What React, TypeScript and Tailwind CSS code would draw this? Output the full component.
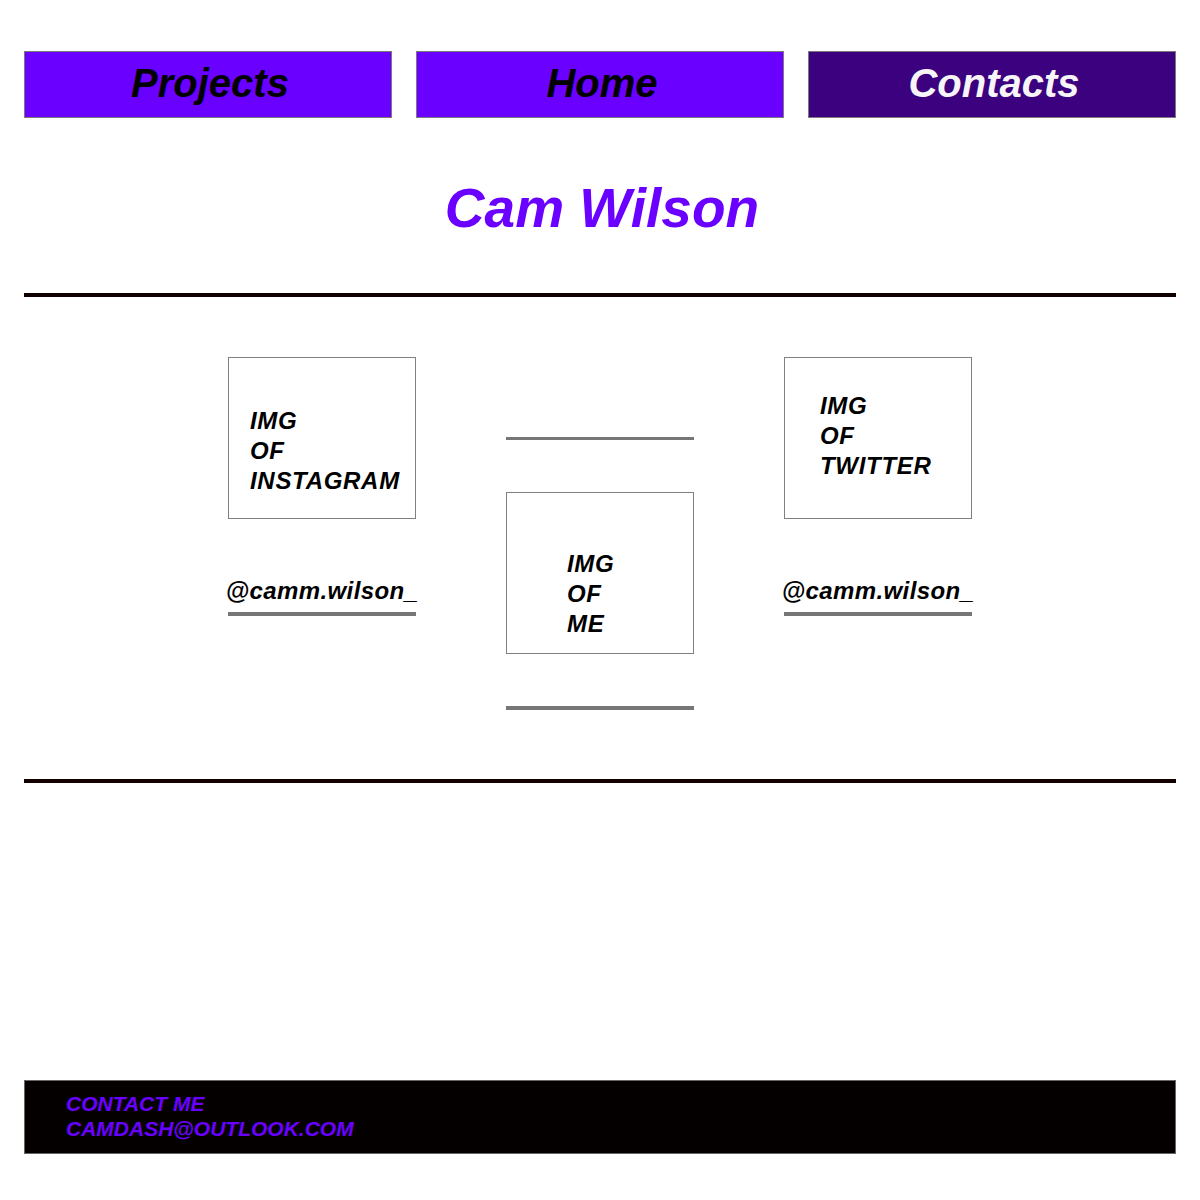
// App.tsx - Contacts page: nav tabs, name heading, social cards, footer

const navItems = [
  { label: "Projects", active: false },
  { label: "Home", active: false },
  { label: "Contacts", active: true },
];

function ImgBox({ lines, pad }: { lines: string[]; pad: string }) {
  return (
    <div className={`h-[162px] w-[188px] border border-[#808080] text-[24px] leading-[30px] tracking-[0.7px] text-black ${pad}`}>
      {lines.map((line) => (
        <p key={line}>{line}</p>
      ))}
    </div>
  );
}

function Handle() {
  return (
    <>
      <div className="mt-[57px] flex justify-center">
        <p className="whitespace-nowrap text-[24px] leading-[30px] tracking-[0.4px] text-black">@camm.wilson_</p>
      </div>
      <div className="mt-[6px] h-[4px] bg-[#767676]" />
    </>
  );
}

export default function App() {
  return (
    <div className="min-h-[1200px] bg-white px-[24px] pt-[51px] font-['Liberation_Sans',Arial,sans-serif] font-bold italic">
      {/* Nav tabs */}
      <nav className="flex gap-[24px]">
        {navItems.map((item) => (
          <div
            key={item.label}
            className={`flex h-[67px] flex-1 items-center justify-center border border-[#7a7a7a] pb-[4px] pl-[4px] text-[40px] ${
              item.active ? "bg-[#3b017f] text-[#f7f5f7]" : "bg-[#6a00ff] text-black"
            }`}
          >
            {item.label}
          </div>
        ))}
      </nav>

      {/* Name */}
      <h1 className="mt-[58px] pl-[4px] text-center text-[55px] leading-[64px] text-[#6a00ff]">Cam Wilson</h1>

      <div className="mt-[53px] h-[4px] bg-[#120000]" />

      {/* Social cards */}
      <section className="flex items-start justify-center gap-[90px] pt-[60px] pb-[69px]">
        <div className="w-[188px]">
          <ImgBox lines={["IMG", "OF", "INSTAGRAM"]} pad="pl-[21px] pt-[48px]" />
          <Handle />
        </div>

        <div className="w-[188px] pt-[80px]">
          <div className="h-[3px] bg-[#767676]" />
          <div className="mt-[52px]">
            <ImgBox lines={["IMG", "OF", "ME"]} pad="pl-[60px] pt-[56px]" />
          </div>
          <div className="mt-[52px] h-[4px] bg-[#767676]" />
        </div>

        <div className="w-[188px]">
          <ImgBox lines={["IMG", "OF", "TWITTER"]} pad="pl-[35px] pt-[33px]" />
          <Handle />
        </div>
      </section>

      <div className="h-[4px] bg-[#120000]" />

      {/* Footer */}
      <footer className="mt-[297px] h-[74px] border border-[#666] bg-[#050000] pl-[41px] pt-[10px] text-[21px] leading-[25px] text-[#6a00ff]">
        <p>CONTACT ME</p>
        <p>CAMDASH@OUTLOOK.COM</p>
      </footer>
    </div>
  );
}
